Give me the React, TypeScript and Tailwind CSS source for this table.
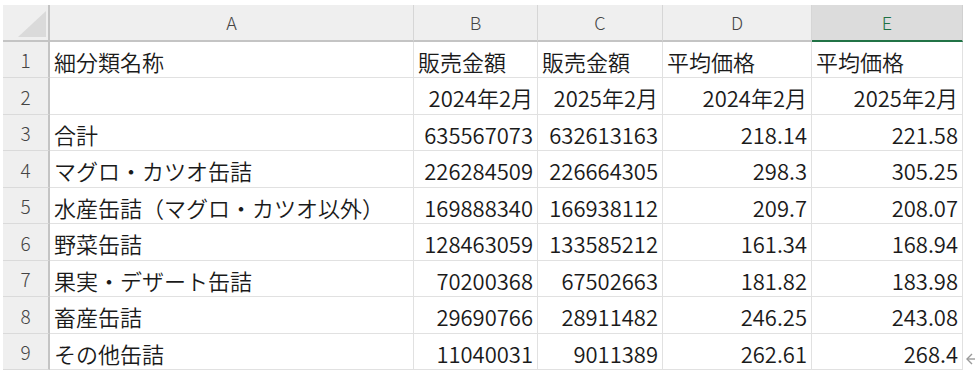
import React from "react";

const rows: string[][] = [
  ["細分類名称", "販売金額", "販売金額", "平均価格", "平均価格"],
  ["", "2024年2月", "2025年2月", "2024年2月", "2025年2月"],
  ["合計", "635567073", "632613163", "218.14", "221.58"],
  ["マグロ・カツオ缶詰", "226284509", "226664305", "298.3", "305.25"],
  ["水産缶詰（マグロ・カツオ以外）", "169888340", "166938112", "209.7", "208.07"],
  ["野菜缶詰", "128463059", "133585212", "161.34", "168.94"],
  ["果実・デザート缶詰", "70200368", "67502663", "181.82", "183.98"],
  ["畜産缶詰", "29690766", "28911482", "246.25", "243.08"],
  ["その他缶詰", "11040031", "9011389", "262.61", "268.4"],
];

const cols = ["A", "B", "C", "D", "E"];

export default function App() {
  return (
    <div
      className="w-[975px] h-[378px] bg-white overflow-hidden flex pt-[5px] pl-[3px]"
      style={{ fontFamily: '"Noto Sans CJK JP", "Noto Sans", sans-serif' }}
    >
      <div className="grid grid-cols-[47px_364px_124px_125px_149px_151px] grid-rows-[37px_36px_37px_36px_37px_36px_37px_36px_37px_36px] text-[#1a1a1a]">
        {/* corner */}
        <div className="bg-[#efefef] border-b-2 border-r-2 border-[#c4c4c4] flex items-end justify-end pr-[2px] pb-[3px]">
          <svg width="28" height="26" viewBox="0 0 28 26">
            <polygon points="28,0 28,26 0,26" fill="#dadada" />
          </svg>
        </div>
        {cols.map((c) => {
          const sel = c === "E";
          return (
            <div
              key={c}
              className={
                sel
                  ? "bg-[#dcdcdc] border-b-2 border-[#217346] border-r border-r-[#d0d0d0] flex items-center justify-center text-[18px] font-light text-[#1e7145]"
                  : "bg-[#efefef] border-b-2 border-[#c4c4c4] border-r border-r-[#d6d6d6] flex items-center justify-center text-[18px] font-light text-[#444]"
              }
            >
              {c}
            </div>
          );
        })}
        {rows.map((r, i) => (
          <React.Fragment key={i}>
            <div className="bg-[#efefef] border-r-2 border-r-[#c4c4c4] border-b border-b-[#dadada] flex items-center justify-center pt-[2px] text-[19px] font-light text-[#444]">
              {i + 1}
            </div>
            {r.map((v, j) => {
              const left = j === 0 || i === 0;
              return (
                <div
                  key={j}
                  className={
                    "border-r border-b border-[#e1e1e1] flex items-center pt-[2px] text-[22px] font-[350] leading-none whitespace-nowrap overflow-visible " +
                    (left ? "justify-start pl-[4px]" : "justify-end pr-[4px]")
                  }
                >
                  {v}
                </div>
              );
            })}
          </React.Fragment>
        ))}
      </div>
      <div className="flex-1 flex flex-col justify-end pb-[12px] pl-[2px]">
        <svg width="11" height="14" viewBox="0 0 11 14">
          <path d="M7 2 L2 7 L7 12" stroke="#9a9a9a" strokeWidth="1.4" fill="none" />
          <path d="M2 7 L11 7" stroke="#9a9a9a" strokeWidth="1.4" />
        </svg>
      </div>
    </div>
  );
}
